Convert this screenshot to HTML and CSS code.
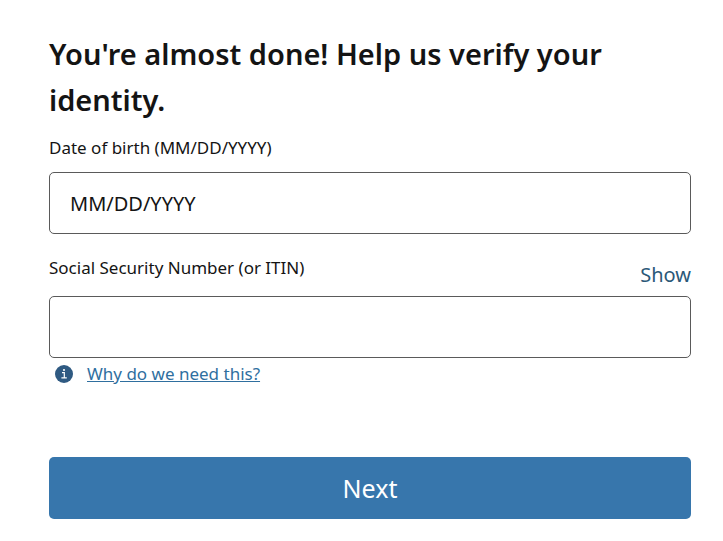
FILE: index.html
```html
<!DOCTYPE html>
<html lang="en">
<head>
<meta charset="utf-8">
<meta name="viewport" content="width=device-width, initial-scale=1">
<title>Verify your identity</title>
<link rel="stylesheet" href="styles.css">
</head>
<body>
<main class="page">
  <h1 class="title">You're almost done! Help us verify your identity.</h1>
  <form class="form">
    <label class="label" for="dob">Date of birth (MM/DD/YYYY)</label>
    <input class="field" id="dob" type="text" placeholder="MM/DD/YYYY">
    <div class="label-row">
      <label class="label" for="ssn">Social Security Number (or ITIN)</label>
      <button class="show" type="button">Show</button>
    </div>
    <input class="field" id="ssn" type="password">
    <div class="help">
      <svg class="info" viewBox="0 0 18 18" aria-hidden="true">
        <circle cx="9" cy="9" r="9" fill="#2f5a82"/>
        <circle cx="9" cy="5" r="1.1" fill="#fff"/>
        <path d="M7 7.6h2.3v5M6.4 12.8h5.4" fill="none" stroke="#fff" stroke-width="1.2"/>
      </svg>
      <a class="help-link" href="#why">Why do we need this?</a>
    </div>
    <button class="next" type="submit">Next</button>
  </form>
</main>
</body>
</html>
```

FILE: styles.css
```css
* {
  box-sizing: border-box;
}

body {
  margin: 0;
  background: #fff;
  color: #141414;
  font-family: "Noto Sans", "Open Sans", sans-serif;
}

.page {
  padding: 31px 32px 22px 49px;
}

.title {
  margin: 0 0 13px;
  font-size: 29px;
  line-height: 46px;
  font-weight: 600;
}

.form {
  display: flex;
  flex-direction: column;
}

.label {
  font-size: 17px;
  line-height: 24px;
}

.field {
  width: 100%;
  height: 62px;
  padding: 0 20px;
  border: 1px solid #5a5a5a;
  border-radius: 5px;
  background: #fff;
  color: #141414;
  font: inherit;
  font-size: 20px;
}

.field::placeholder {
  color: #141414;
  opacity: 1;
}

.form > .label {
  margin-bottom: 12px;
}

.label-row {
  display: flex;
  justify-content: space-between;
  align-items: flex-start;
  margin-top: 22px;
  height: 40px;
}

.show {
  margin-top: 5px;
  padding: 0;
  border: 0;
  background: none;
  color: #2b5878;
  font: inherit;
  font-size: 20px;
  line-height: 28px;
}

.help {
  display: flex;
  align-items: center;
  gap: 14px;
  margin: 3px 0 70px;
  padding-left: 6px;
}

.info {
  width: 18px;
  height: 18px;
}

.help-link {
  color: #2f6f9f;
  font-size: 17px;
  line-height: 26px;
}

.next {
  height: 62px;
  border: 0;
  border-radius: 5px;
  background: #3776ac;
  color: #fff;
  font: inherit;
  font-size: 25px;
}
```
